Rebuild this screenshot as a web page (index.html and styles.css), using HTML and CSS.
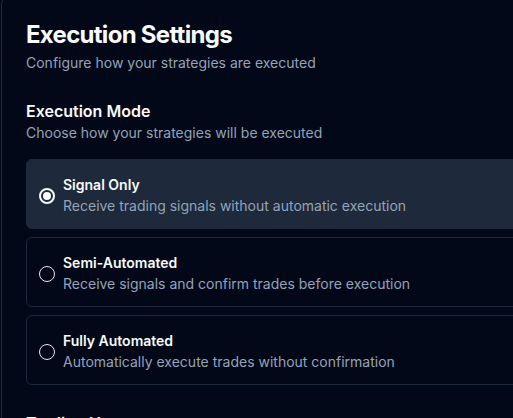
FILE: index.html
```html
<!DOCTYPE html>
<html lang="en">
<head>
    <meta charset="UTF-8">
    <meta name="viewport" content="width=device-width, initial-scale=1.0">
    <title>Execution Settings</title>
    <link rel="stylesheet" href="styles.css">
</head>
<body>

<div class="card">
    <!-- Header -->
    <div class="card-header">
        <h1>Execution Settings</h1>
        <p>Configure how your strategies are executed</p>
    </div>

    <!-- Execution Mode -->
    <div class="section">
        <h2>Execution Mode</h2>
        <p class="section-desc">Choose how your strategies will be executed</p>

        <div class="options">
            <label class="option selected">
                <span class="radio checked"></span>
                <span class="option-text">
                    <span class="option-title">Signal Only</span>
                    <span class="option-desc">Receive trading signals without automatic execution</span>
                </span>
            </label>
            <label class="option">
                <span class="radio"></span>
                <span class="option-text">
                    <span class="option-title">Semi-Automated</span>
                    <span class="option-desc">Receive signals and confirm trades before execution</span>
                </span>
            </label>
            <label class="option">
                <span class="radio"></span>
                <span class="option-text">
                    <span class="option-title">Fully Automated</span>
                    <span class="option-desc">Automatically execute trades without confirmation</span>
                </span>
            </label>
        </div>
    </div>

    <!-- Trading Hours -->
    <div class="section">
        <h2>Trading Hours</h2>
        <p class="section-desc">Limit when your strategies are allowed to trade</p>
    </div>
</div>

</body>
</html>
```

FILE: styles.css
```css
html, body {
    margin: 0;
    padding: 0;
    background-color: #020817;
    overflow: hidden;
}
body {
    font-family: Inter, "Noto Sans", sans-serif;
    color: #f8fafc;
}
.card {
    width: 720px;
    margin: -4px 0 0 1px;
    border: 1px solid #1e293b;
    border-radius: 8px;
    padding: 22px 24px 24px 24px;
    background-color: #020817;
}
.card-header h1 {
    margin: 0;
    font-size: 24px;
    line-height: 32px;
    font-weight: 700;
    letter-spacing: -0.03em;
}
.card-header p {
    margin: 2px 0 0 0;
    font-size: 14px;
    line-height: 20px;
    color: #94a3b8;
}
.section {
    margin-top: 26px;
}
.section h2 {
    margin: 0;
    font-size: 16px;
    line-height: 24px;
    font-weight: 600;
}
.section-desc {
    margin: 0;
    font-size: 14px;
    line-height: 20px;
    color: #94a3b8;
}
.options {
    display: flex;
    flex-direction: column;
    gap: 8px;
    margin-top: 16px;
}
.option {
    display: flex;
    align-items: center;
    gap: 8px;
    padding: 15px 12px 12px 12px;
    border: 1px solid #1e293b;
    border-radius: 6px;
    cursor: pointer;
}
.option.selected {
    background-color: #1e293b;
}
.radio {
    flex: none;
    width: 16px;
    height: 16px;
    box-sizing: border-box;
    border: 1.5px solid #e2e8f0;
    border-radius: 50%;
    display: flex;
    align-items: center;
    justify-content: center;
}
.radio.checked {
    border: 2px solid #f8fafc;
}
.radio.checked::after {
    content: "";
    width: 8px;
    height: 8px;
    border-radius: 50%;
    background-color: #f8fafc;
}
.option-text {
    display: flex;
    flex-direction: column;
    gap: 1px;
}
.option-title {
    font-size: 14px;
    line-height: 20px;
    font-weight: 600;
}
.option-desc {
    font-size: 14px;
    line-height: 20px;
    color: #94a3b8;
}
```
